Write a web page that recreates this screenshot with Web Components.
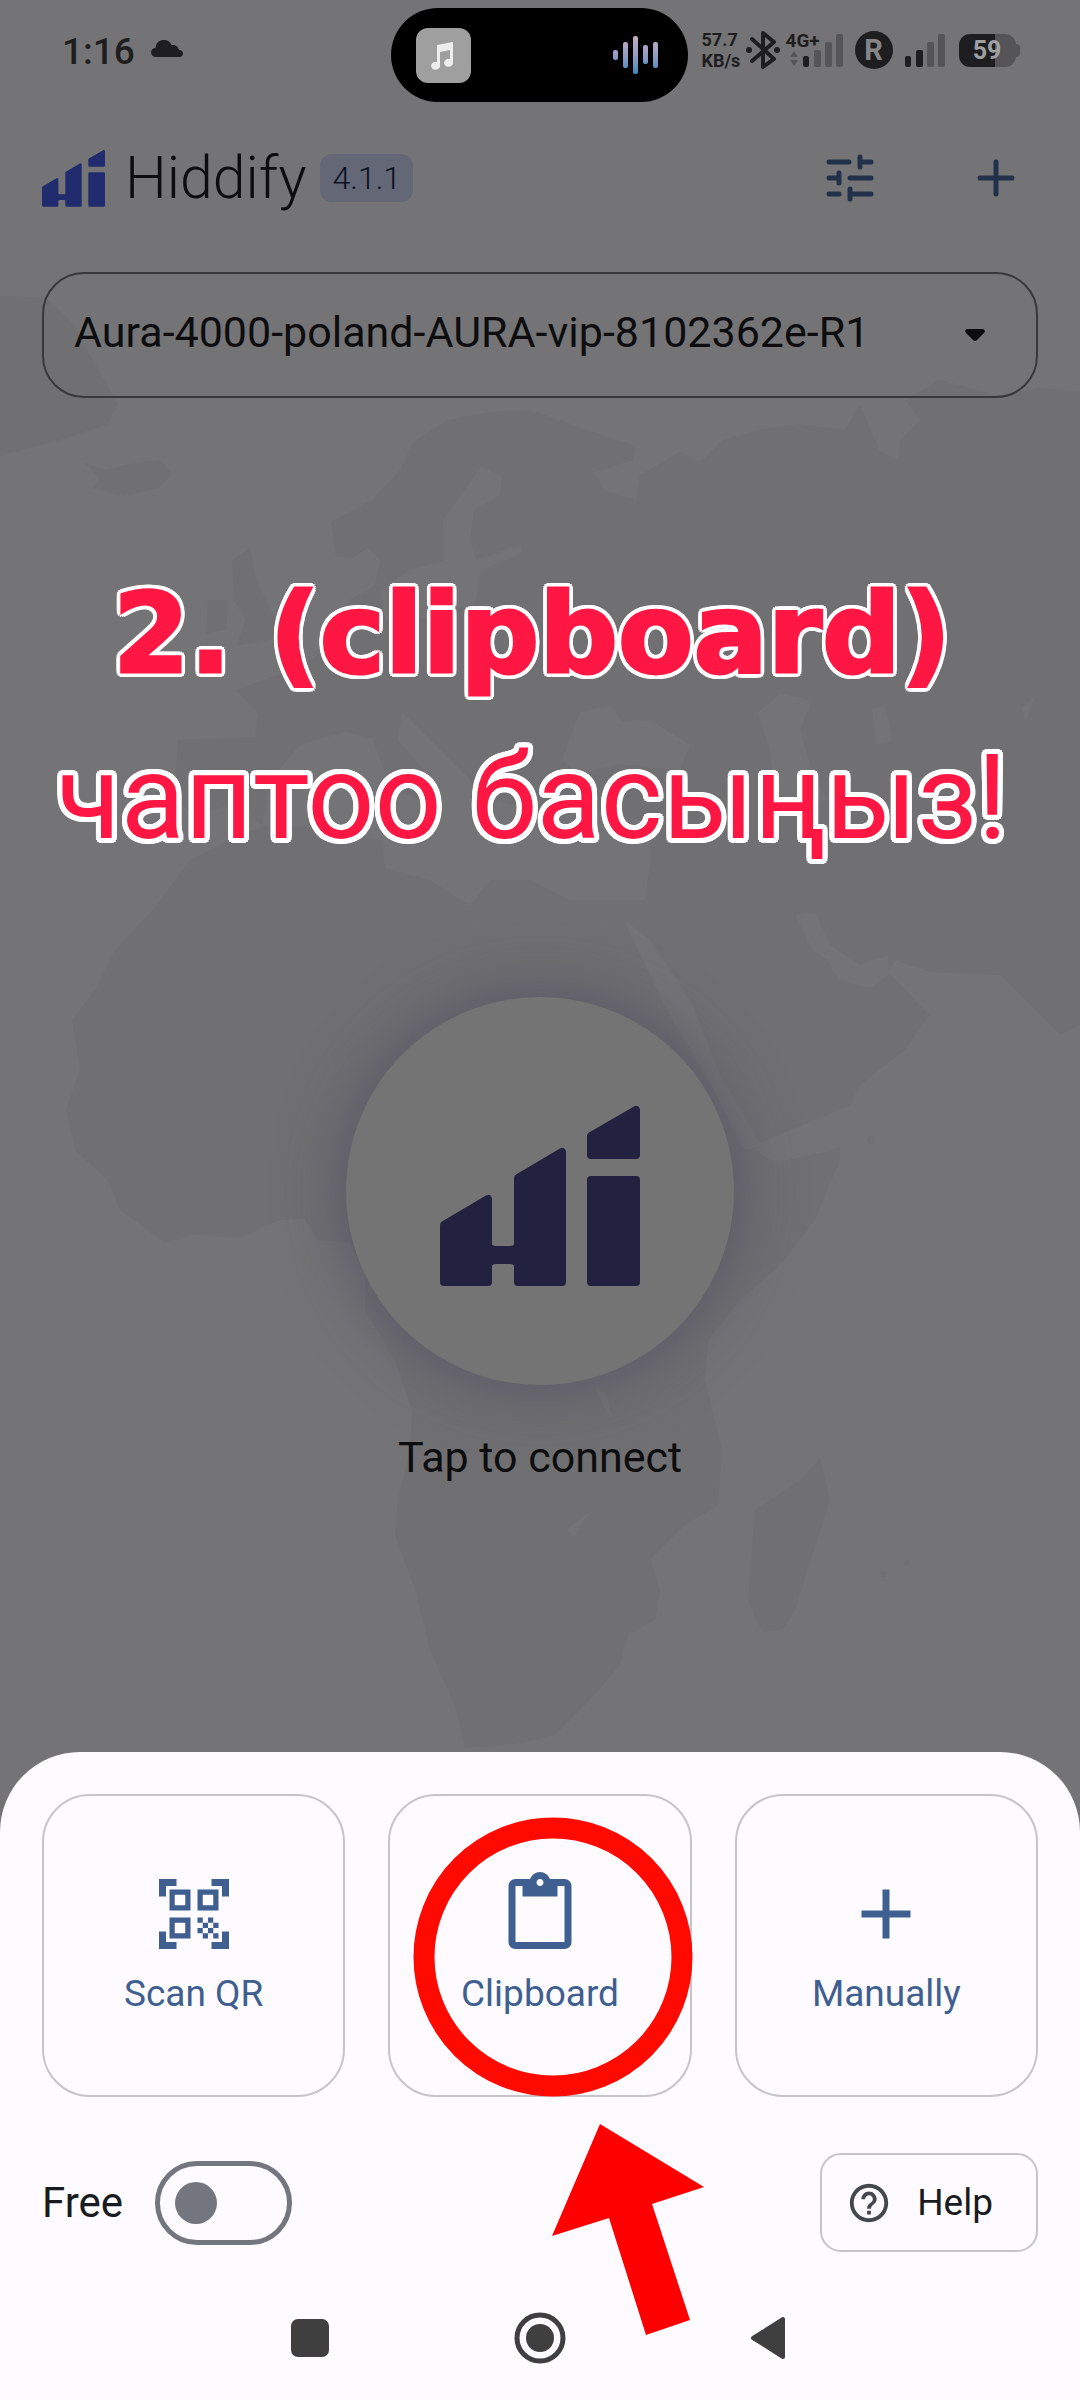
<!DOCTYPE html>
<html lang="ky">
<head>
<meta charset="utf-8">
<meta name="viewport" content="width=device-width, initial-scale=1">
<title>Hiddify</title>
<style>
  html, body { margin: 0; }
  body { font-family: Roboto, "Noto Sans", sans-serif; background: #747476; }
</style>
</head>
<body>
<app-screen>
  <world-map slot="backdrop"></world-map>
  <status-bar slot="top"></status-bar>
  <app-header slot="top" version="4.1.1">Hiddify</app-header>
  <profile-picker slot="main"></profile-picker>
  <guide-caption slot="main"><span slot="lead">2. (clipboard)</span>чаптоо басыңыз!</guide-caption>
  <connect-button slot="main">Tap to connect</connect-button>
  <add-sheet slot="bottom">
    <action-card icon="qr" slot="cards">Scan QR</action-card>
    <action-card icon="clipboard" slot="cards" marked>Clipboard</action-card>
    <action-card icon="plus" slot="cards">Manually</action-card>
    <free-switch slot="options">Free</free-switch>
    <help-button slot="options">Help</help-button>
    <nav-bar slot="nav"></nav-bar>
  </add-sheet>
</app-screen>

<script>
const define = (name, html, setup) => customElements.define(name, class extends HTMLElement {
  constructor() {
    super();
    const t = document.createElement('template');
    t.innerHTML = html;
    this.attachShadow({ mode: 'open' }).appendChild(t.content.cloneNode(true));
  }
  connectedCallback() { if (setup) setup(this, this.shadowRoot); }
});

const LOGO = `<svg class="logo" viewBox="0 0 200 180" aria-hidden="true"><g fill="currentColor" stroke="currentColor" stroke-width="8" stroke-linejoin="round">
  <path d="M4 119 48 93V144H78V72L122 46V176H78V154H48V176H4Z" stroke="none"/>
  <path d="M4 119 48 93V176H4Z"/><path d="M78 72 122 46V176H78Z"/>
  <path d="M151 30 196 4V49H151Z"/><path d="M151 74H196V176H151Z"/></g>
  <path fill="currentColor" d="M50 136Q52 140 56 140H70Q74 140 76 136V162Q74 158 70 158H56Q52 158 50 162Z"/></svg>`;

define('app-screen', `<style>
  :host { display: flex; flex-direction: column; position: relative; min-height: 100vh; background: #747476; overflow: hidden; }
  main { flex: 1; display: flex; flex-direction: column; position: relative; }
  header, footer { position: relative; }
</style>
<slot name="backdrop"></slot>
<header><slot name="top"></slot></header>
<main><slot name="main"></slot></main>
<footer><slot name="bottom"></slot></footer>`);

define('world-map', `<style>
  :host { display: block; position: absolute; inset: 0; }
  svg { display: block; width: 100%; height: 100%; }
</style>
<svg viewBox="0 0 1080 2400" preserveAspectRatio="xMidYMin slice" aria-hidden="true">
  <g fill="#707072">
    <path d="M0 296 45 297 70 320 118 404 108 424 60 440 0 456Z"/>
    <path d="M83 462 104 470 130 464 160 460 172 474 158 488 124 496 92 488 100 478Z"/>
    <path d="M1080 392 1040 388 1000 396 940 380 905 400 920 420 900 440 898 460 880 452 860 405 845 430 800 424 757 430 722 440 700 462 680 452 640 475 635 495 600 480 592 473 633 460 636 446 571 424 530 410 490 412 448 420 413 442 400 470 372 500 331 522 336 556 352 558 368 548 380 560 375 585 350 600 335 640 300 668 262 680 236 690 258 714 255 737 178 740 174 800 196 815 240 802 262 826 190 860 157 905 115 950 95 990 72 1020 80 1070 66 1110 75 1150 108 1180 120 1210 165 1243 195 1235 240 1238 280 1220 305 1219 318 1240 350 1243 365 1275 365 1310 395 1360 412 1410 410 1450 398 1500 395 1535 415 1590 430 1650 455 1705 465 1748 510 1745 555 1735 590 1700 620 1665 628 1635 655 1620 660 1590 650 1560 685 1525 718 1505 722 1450 705 1380 708 1340 740 1300 780 1265 815 1220 840 1160 840 1148 775 1163 755 1150 760 1143 850 1105 860 1085 905 1050 930 1015 915 1000 888 972 895 960 930 972 1000 975 1030 1005 1060 1035 1080 1025Z"/>
    <path d="M820 1458 830 1500 795 1610 782 1630 762 1632 748 1600 755 1510 800 1480Z"/>
    <path d="M232 560 250 548 256 580 276 620 272 640 236 646 246 620 234 600ZM208 600 228 600 226 630 206 634Z"/>
    <circle cx="871" cy="1140" r="4"/><circle cx="883" cy="1574" r="3"/><circle cx="907" cy="1563" r="3"/>
  </g>
  <g fill="#747476">
    <path d="M300 745 345 732 372 738 392 790 420 800 424 770 398 740 402 712 430 740 470 780 480 815 500 800 530 812 590 810 640 820 652 850 645 900 570 900 530 880 490 880 470 906 430 880 385 868 382 840 300 826 262 826 270 780Z"/>
    <path d="M562 760 580 712 610 705 622 722 650 720 690 745 680 770 620 764 580 774Z"/>
    <path d="M758 712 780 694 812 700 800 730 812 770 826 800 800 812 775 790 770 750Z"/>
    <path d="M443 520 480 468 502 475 500 495 474 510 470 540 476 560 520 545 522 552 480 572 476 600 440 618 385 620 380 590 410 570 444 560Z"/>
    <path d="M592 468 620 478 640 475 636 500 604 490Z"/>
    <path d="M624 920 650 940 690 1000 720 1075 762 1146 745 1150 700 1065 664 1005Z"/>
    <path d="M795 915 815 912 830 945 860 965 888 955 888 975 870 988 838 980 828 960 812 950Z"/>
    <path d="M872 710 885 704 892 740 876 745ZM1022 708 1035 696 1026 722Z"/>
    <path d="M594 1380 608 1400 612 1420 600 1400ZM566 1530 590 1512 574 1536Z"/>
  </g>
</svg>`);

define('status-bar', `<style>
  :host { display: grid; grid-template-columns: 1fr 297px 1fr; padding: 8px 2px 0 0; height: 94px; color: #1e1e20; }
  .left { display: flex; align-items: center; gap: 16px; height: 86px; padding-left: 62px; font-size: 37px; font-weight: 500; }
  .left svg { margin-bottom: 4px; }
  .island { display: flex; align-items: center; justify-content: space-between; box-sizing: border-box; padding: 0 28px 0 25px; border-radius: 47px; background: #000; }
  .right { display: flex; align-items: center; gap: 6px; height: 84px; padding-left: 14px; }
  .rate { width: 36px; text-align: center; font-size: 18px; line-height: 21px; font-weight: 700; white-space: nowrap; }
  .rate span { display: block; }
  .bt { margin-left: 2px; }
  .net { display: flex; height: 38px; }
  .kind { display: flex; flex-direction: column; align-items: flex-start; width: 17px; font-size: 19px; line-height: 20px; font-weight: 700; white-space: nowrap; }
  .kind svg { margin-left: 3px; }
  .roam { display: grid; place-items: center; width: 38px; height: 38px; margin: 0 6px; border-radius: 50%; background: #1e1e20; color: #858587; font-size: 29px; line-height: 38px; font-weight: 700; }
  .bat { display: flex; align-items: center; margin-left: 8px; }
  .cell { width: 57px; height: 33px; border-radius: 11px; background: linear-gradient(90deg, #1e1e20 63%, #555557 63%); color: #a0a0a2; font-size: 25px; line-height: 33px; font-weight: 700; text-align: center; }
  .nub { width: 4px; height: 13px; border-radius: 0 4px 4px 0; background: #555557; }
  svg { display: block; flex: none; }
</style>
<div class="left"><span>1:16</span>
  <svg width="32" height="20" viewBox="0 0 32 20" aria-hidden="true"><path fill="currentColor" d="M5 18C2 18 0 16 0 13.500 0 11 2 9 4.500 9 5 3.500 8.500 1 13 1 17 1 19.500 3 20.500 6 24 5.500 27.500 7.500 28 11 30.500 11 32 12.500 32 14.500 32 16.500 30.500 18 28.500 18Z"/></svg>
</div>
<div class="island">
  <svg width="55" height="55" viewBox="0 0 55 55" aria-hidden="true"><rect width="55" height="55" rx="12" fill="#9f9f9f"/><path fill="#eee" d="M21 17 37 14V34A4.500 4 0 1 1 34 31V22L24 24V37A4.500 4 0 1 1 21 34Z"/></svg>
  <svg width="48" height="40" viewBox="0 0 48 40" aria-hidden="true"><defs><linearGradient id="g" x1="0" y1="0" x2="0" y2="40" gradientUnits="userSpaceOnUse"><stop stop-color="#c9a9c4"/><stop offset=".45" stop-color="#9a9fc4"/><stop offset="1" stop-color="#3f87bd"/></linearGradient></defs>
    <g fill="url(#g)"><rect x="1" y="15" width="5" height="10" rx="2"/><rect x="11" y="7" width="5" height="26" rx="2"/><rect x="21" y="1" width="5" height="38" rx="2"/><rect x="31" y="10" width="5" height="19" rx="2"/><rect x="41" y="7" width="5" height="26" rx="2"/></g></svg>
</div>
<div class="right">
  <div class="rate"><span>57.7</span><span>KB/s</span></div>
  <svg class="bt" width="34" height="38" viewBox="0 0 34 38" aria-label="Bluetooth"><path fill="none" stroke="currentColor" stroke-width="4" stroke-linejoin="round" stroke-linecap="round" d="M6 8 28 28 17 36V2L28 11 6 30"/><circle cx="3" cy="19" r="3" fill="currentColor"/><circle cx="31" cy="19" r="3" fill="currentColor"/></svg>
  <div class="net">
    <div class="kind"><span>4G+</span><svg width="10" height="16" viewBox="0 0 10 16" aria-hidden="true"><path fill="#555557" d="M5 0 9 6H1ZM5 15 1 9H9Z"/></svg></div>
    <svg width="40" height="38" viewBox="0 0 40 38" aria-hidden="true"><rect y="25" width="6" height="11" rx="2" fill="#1e1e20"/><g fill="#555557"><rect x="11" y="19" width="7" height="17" rx="2"/><rect x="22" y="11" width="7" height="25" rx="2"/><rect x="33" y="3" width="7" height="33" rx="2"/></g></svg>
  </div>
  <div class="roam">R</div>
  <svg width="40" height="38" viewBox="0 0 40 38" aria-hidden="true"><g fill="#1e1e20"><rect y="25" width="6" height="11" rx="2"/><rect x="11" y="19" width="7" height="17" rx="2"/></g><g fill="#555557"><rect x="22" y="11" width="7" height="25" rx="2"/><rect x="33" y="3" width="7" height="33" rx="2"/></g></svg>
  <div class="bat"><div class="cell">59</div><div class="nub"></div></div>
</div>`);

define('app-header', `<style>
  :host { display: flex; align-items: center; height: 152px; padding: 0 50px 0 42px; color: #0d0d0f; }
  .logo { display: block; width: 63px; height: 57px; color: #202c6e; }
  h1 { margin: 0 14px 0 20px; font-size: 59px; line-height: 68px; font-weight: 300; }
  .version { padding: 0 12px; border-radius: 12px; background: #636776; color: #0c1222; font-size: 32px; line-height: 48px; font-weight: 300; }
  .tools { display: flex; gap: 78px; margin-left: auto; }
  button { display: grid; place-items: center; width: 68px; height: 68px; margin: 0; padding: 0; border: 0; background: none; color: #22304a; }
</style>
${LOGO}<h1><slot></slot></h1><span class="version"></span>
<div class="tools">
  <button aria-label="Settings"><svg width="48" height="48" viewBox="0 0 48 48"><path fill="none" stroke="currentColor" stroke-width="5" stroke-linecap="round" d="M3 8H23M34 3V13M36 8H45M3 24H12M13 19V29M24 24H45M3 40H13M24 35V45M26 40H45"/></svg></button>
  <button aria-label="Add"><svg width="38" height="38" viewBox="0 0 38 38"><path stroke="currentColor" stroke-width="5" stroke-linecap="round" d="M19 3V35M3 19H35"/></svg></button>
</div>`, (el, root) => { root.querySelector('.version').textContent = el.getAttribute('version'); });

define('profile-picker', `<style>
  :host { display: grid; margin: 18px 42px 0; align-items: center; }
  select, svg { grid-area: 1 / 1; }
  select { appearance: none; width: 100%; height: 126px; margin: 0; padding: 0 100px 6px 30px; border: 2px solid #39393b; border-radius: 42px; background: none; color: #0d0d0f; font: 400 43px Roboto, "Noto Sans", sans-serif; }
  svg { justify-self: end; margin-right: 52px; pointer-events: none; }
</style>
<select aria-label="Profile"><option>Aura-4000-poland-AURA-vip-8102362e-R1</option></select>
<svg width="22" height="14" viewBox="0 0 22 14" aria-hidden="true"><path fill="#0d0d0f" d="M3 1H19Q22 2 20 5L13 12Q11 14 9 12L2 5Q0 2 3 1Z"/></svg>`);

define('guide-caption', `<style>
  :host { display: block; margin-top: 154px; padding-right: 16px; text-align: center; color: #ff1744; font-size: 118px; line-height: 164px; white-space: nowrap;
    text-shadow: 5px 0 #fff, -5px 0 #fff, 0 5px #fff, 0 -5px #fff, 4px 4px #fff, -4px 4px #fff, 4px -4px #fff, -4px -4px #fff,
      5px 2px #fff, -5px 2px #fff, 5px -2px #fff, -5px -2px #fff, 2px 5px #fff, -2px 5px #fff, 2px -5px #fff, -2px -5px #fff; }
  p { margin: 0; }
  .lead { font-family: "DejaVu Sans", sans-serif; font-size: 110px; font-weight: 700; -webkit-text-stroke: 3px currentColor; }
</style>
<p class="lead"><slot name="lead"></slot></p><p><slot></slot></p>`);

define('connect-button', `<style>
  :host { display: flex; flex-direction: column; align-items: center; gap: 44px; margin-top: 117px; padding-bottom: 40px; color: #0d0d0f; }
  button { display: grid; place-items: center; box-sizing: border-box; width: 388px; height: 388px; padding: 10px 0 0; border: 0; border-radius: 50%; background: #747474; color: #22213f; box-shadow: 0 0 60px 6px rgba(68, 62, 88, .5); }
  .logo { display: block; width: 200px; height: 180px; }
  label { font-size: 43px; line-height: 56px; }
</style>
<button id="tap">${LOGO}</button><label for="tap"><slot></slot></label>`);

define('add-sheet', `<style>
  :host { display: block; padding: 42px 42px 0; border-radius: 80px 80px 0 0; background: #fdfbff; }
  .cards { display: grid; grid-template-columns: repeat(3, 1fr); gap: 43px; }
  .options { display: flex; align-items: center; justify-content: space-between; margin-top: 56px; }
</style>
<div class="cards"><slot name="cards"></slot></div>
<div class="options"><slot name="options"></slot></div>
<slot name="nav"></slot>`);

const ICONS = {
  qr: 'M9.500 6.500v3h-3v-3h3M11 5H5v6h6V5zm-1.500 9.500v3h-3v-3h3M11 13H5v6h6v-6zm6.500-6.500v3h-3v-3h3M19 5h-6v6h6V5zm-6 8h1.500v1.500H13V13zm1.500 1.500H16V16h-1.500v-1.500zM16 13h1.500v1.500H16V13zm-3 3h1.500v1.500H13V16zm1.500 1.500H16V19h-1.500v-1.500zM16 16h1.500v1.500H16V16zm1.500-1.500H19V16h-1.500v-1.500zm0 3H19V19h-1.500v-1.500zM22 7h-2V4h-3V2h5v5zm0 15v-5h-2v3h-3v2h5zM2 22h5v-2H4v-3H2v5zM2 2v5h2V4h3V2H2z',
  clipboard: 'M19 2h-4.180C14.400.84 13.300 0 12 0c-1.300 0-2.400.84-2.820 2H5c-1.100 0-2 .9-2 2v16c0 1.100.9 2 2 2h14c1.100 0 2-.9 2-2V4c0-1.100-.9-2-2-2zm-7 0c.55 0 1 .45 1 1s-.45 1-1 1-1-.45-1-1 .45-1 1-1zm7 18H5V4h2v3h10V4h2v16z',
  plus: 'M19 13h-6v6h-2v-6H5v-2h6V5h2v6h6v2z'
};

define('action-card', `<style>
  :host { display: block; position: relative; }
  button { display: flex; flex-direction: column; align-items: center; justify-content: center; gap: 16px; box-sizing: border-box; width: 100%; aspect-ratio: 1; margin: 0; padding: 0 0 3px; border: 2px solid #c4c4ca; border-radius: 48px; background: none; color: #3f5f90; font: 400 37px/44px Roboto, "Noto Sans", sans-serif; }
  .icon { display: block; width: 84px; height: 84px; }
  .mark { display: none; position: absolute; left: 24px; top: 22px; pointer-events: none; }
  :host([marked]) { z-index: 1; }
  :host([marked]) .mark { display: block; }
</style>
<button><svg class="icon" viewBox="0 0 24 24" aria-hidden="true"><path fill="currentColor"/></svg><span><slot></slot></span></button>
<svg class="mark" width="296" height="524" viewBox="0 0 296 524" aria-hidden="true">
  <circle cx="141" cy="141" r="129" fill="none" stroke="#ff0a00" stroke-width="21"/>
  <path fill="#f00" d="M188 308 292 371 240 388 278 504 234 519 197 402 140 420Z"/>
</svg>`, (el, root) => root.querySelector('.icon path').setAttribute('d', ICONS[el.getAttribute('icon')]));

define('free-switch', `<style>
  :host { display: flex; align-items: center; gap: 32px; color: #1a1b20; font-size: 42px; line-height: 48px; }
  input { appearance: none; display: flex; align-items: center; box-sizing: border-box; width: 137px; height: 84px; margin: 0; padding: 0 15px; border: 5px solid #73757f; border-radius: 42px; }
  input::before { content: ""; width: 42px; height: 42px; border-radius: 50%; background: #73757f; }
  input:checked { justify-content: flex-end; }
</style>
<label for="free"><slot></slot></label><input id="free" type="checkbox" role="switch">`);

define('help-button', `<style>
  :host { display: block; }
  button { display: flex; align-items: center; gap: 25px; height: 99px; margin: 0; padding: 0 43px 0 24px; border: 2px solid #c4c4ca; border-radius: 21px; background: none; color: #1a1b20; font: 400 37px/44px Roboto, "Noto Sans", sans-serif; }
  svg { display: block; color: #44474e; }
</style>
<button><svg width="46" height="46" viewBox="0 0 24 24" aria-hidden="true"><path fill="currentColor" d="M11 18h2v-2h-2v2zm1-16C6.480 2 2 6.480 2 12s4.480 10 10 10 10-4.480 10-10S17.520 2 12 2zm0 18c-4.410 0-8-3.590-8-8s3.590-8 8-8 8 3.590 8 8-3.590 8-8 8zm0-14c-2.210 0-4 1.790-4 4h2c0-1.100.9-2 2-2s2 .9 2 2c0 2-3 1.750-3 5h2c0-2.250 3-2.500 3-5 0-2.210-1.790-4-4-4z"/></svg><span><slot></slot></span></button>`);

define('nav-bar', `<style>
  :host { display: flex; align-items: center; justify-content: center; gap: 178px; height: 124px; margin-top: 24px; }
  button { display: block; width: 52px; height: 52px; margin: 0; padding: 0; border: 0; background: none; color: #3f3f3f; }
  svg { display: block; }
</style>
<button aria-label="Recents"><svg width="52" height="52"><rect x="7" y="7" width="38" height="38" rx="7" fill="currentColor"/></svg></button>
<button aria-label="Home"><svg width="52" height="52"><circle cx="26" cy="26" r="23" fill="none" stroke="currentColor" stroke-width="5"/><circle cx="26" cy="26" r="14" fill="currentColor"/></svg></button>
<button aria-label="Back"><svg width="52" height="52"><path d="M9 26 39 7V45Z" fill="currentColor" stroke="currentColor" stroke-width="4" stroke-linejoin="round"/></svg></button>`);
</script>
</body>
</html>
